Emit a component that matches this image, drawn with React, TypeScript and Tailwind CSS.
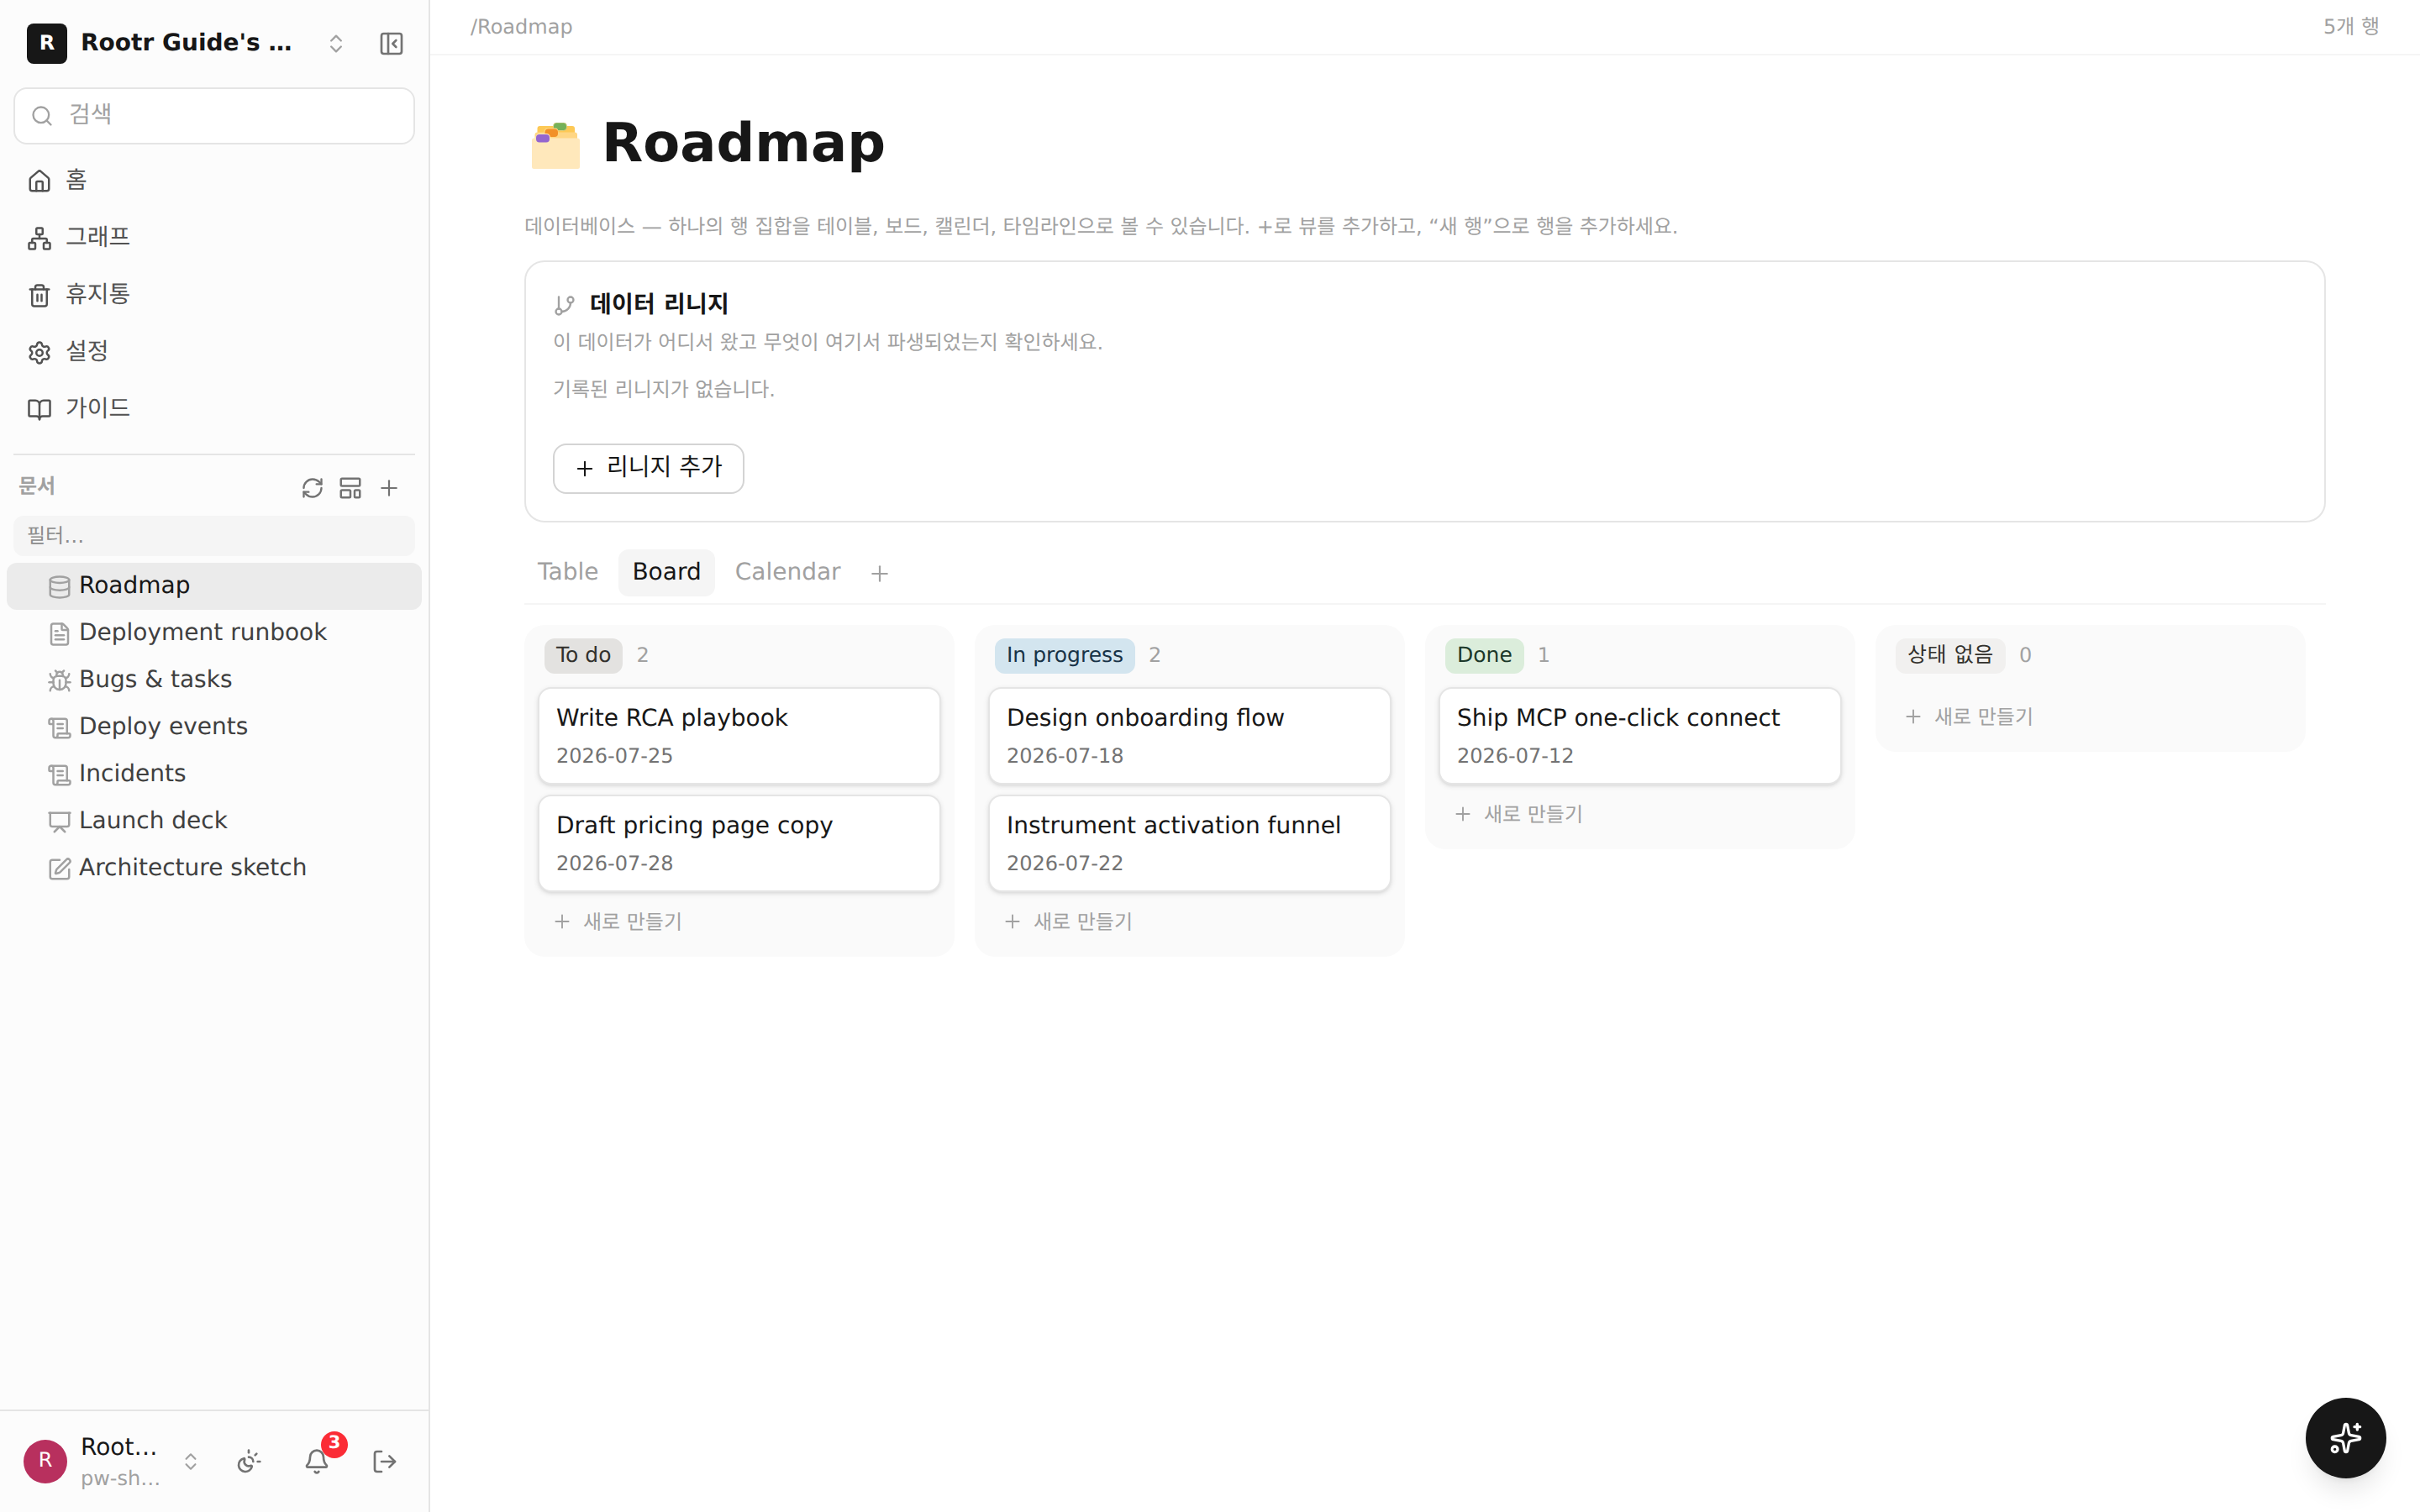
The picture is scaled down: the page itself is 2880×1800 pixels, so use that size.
import { ReactNode } from 'react';
import {
  Bell, BookOpen, Bug, ChevronsUpDown, Database, FileText, GitBranch, House, LayoutTemplate, LogOut,
  LucideIcon, Network, PanelLeftClose, Plus, Presentation, RefreshCw, ScrollText, Search, Settings,
  Sparkles, SquarePen, SunMoon, Trash2,
} from 'lucide-react';

const NAV: Array<{ label: string; icon: LucideIcon }> = [
  { label: '홈', icon: House },
  { label: '그래프', icon: Network },
  { label: '휴지통', icon: Trash2 },
  { label: '설정', icon: Settings },
  { label: '가이드', icon: BookOpen },
];

const DOCS: Array<{ label: string; icon: LucideIcon; active?: boolean }> = [
  { label: 'Roadmap', icon: Database, active: true },
  { label: 'Deployment runbook', icon: FileText },
  { label: 'Bugs & tasks', icon: Bug },
  { label: 'Deploy events', icon: ScrollText },
  { label: 'Incidents', icon: ScrollText },
  { label: 'Launch deck', icon: Presentation },
  { label: 'Architecture sketch', icon: SquarePen },
];

interface BoardColumn {
  name: string;
  badge: string;
  cards: Array<{ title: string; date: string }>;
}

const COLUMNS: BoardColumn[] = [
  {
    name: 'To do',
    badge: 'bg-[#e3e2e0] text-[#32302c]',
    cards: [
      { title: 'Write RCA playbook', date: '2026-07-25' },
      { title: 'Draft pricing page copy', date: '2026-07-28' },
    ],
  },
  {
    name: 'In progress',
    badge: 'bg-[#d3e5ef] text-[#183347]',
    cards: [
      { title: 'Design onboarding flow', date: '2026-07-18' },
      { title: 'Instrument activation funnel', date: '2026-07-22' },
    ],
  },
  {
    name: 'Done',
    badge: 'bg-[#dbeddb] text-[#1c3829]',
    cards: [{ title: 'Ship MCP one-click connect', date: '2026-07-12' }],
  },
  { name: '상태 없음', badge: 'bg-[#f1f0ef] text-[#32302c] tracking-[0.6px]', cards: [] },
];

function Sidebar() {
  return (
    <aside className="flex w-[512px] shrink-0 flex-col border-r-2 border-neutral-200 bg-[#fcfcfc]">
      {/* Workspace switcher */}
      <div className="flex h-[104px] items-center pl-8 pr-7">
        <div className="flex size-12 items-center justify-center rounded-lg bg-neutral-900 pb-[2px] text-[24px] font-bold text-white">
          R
        </div>
        <span className="ml-4 flex-1 whitespace-nowrap pb-[3px] text-[28px] leading-10 font-bold text-neutral-900">
          Rootr Guide's …
        </span>
        <ChevronsUpDown size={28} className="text-neutral-400" />
        <PanelLeftClose size={32} className="ml-9 text-neutral-500" />
      </div>

      <div className="mx-4 flex h-[68px] shrink-0 items-center gap-[18px] rounded-2xl border-2 border-neutral-200 bg-white px-[18px]">
        <Search size={28} className="text-neutral-400" />
        <span className="pb-[2px] text-[28px] leading-10 text-neutral-400">검색</span>
      </div>

      <nav className="mt-[10px] flex flex-col">
        {NAV.map(({ label, icon: Icon }) => (
          <div key={label} className="flex h-17 items-center gap-4 px-8 text-neutral-600">
            <Icon size={30} />
            <span className="pb-[3px] text-[28px] leading-10">{label}</span>
          </div>
        ))}
      </nav>

      {/* Documents */}
      <div className="mx-4 mt-[18px] flex h-[74px] shrink-0 items-center border-t-2 border-neutral-200 pl-[6px] pr-4">
        <span className="flex-1 pt-[2px] text-[24px] leading-8 font-bold text-neutral-400">문서</span>
        <div className="flex items-center gap-4 pt-[5px] text-neutral-500">
          <RefreshCw size={28} />
          <LayoutTemplate size={30} />
          <Plus size={30} strokeWidth={1.75} />
        </div>
      </div>
      <div className="mx-4 flex h-12 shrink-0 items-center rounded-xl bg-neutral-100 px-4">
        <span className="pb-[1px] text-[24px] leading-8 text-[#8c8c8c]">필터…</span>
      </div>
      <div className="mt-2 flex flex-col px-2">
        {DOCS.map(({ label, icon: Icon, active }) => (
          <div
            key={label}
            className={`flex h-14 items-center gap-2 rounded-xl pl-12 ${active ? 'bg-[#ebebeb] text-neutral-900' : 'text-neutral-700'}`}
          >
            <Icon size={30} className="mt-[2px] text-neutral-400" />
            <span className="pb-[3px] text-[28px] leading-10">{label}</span>
          </div>
        ))}
      </div>

      {/* Account */}
      <div className="mt-auto flex h-[122px] shrink-0 items-center border-t-2 border-neutral-200 pl-7 pr-9">
        <div className="flex size-[52px] items-center justify-center rounded-full bg-[#b8305e] pb-1 text-[24px] text-white">
          R
        </div>
        <div className="ml-4 flex w-[100px] flex-col whitespace-nowrap pt-[2px]">
          <span className="text-[28px] leading-[38px] text-neutral-900">Root…</span>
          <span className="text-[24px] leading-9 text-neutral-400">pw-sh…</span>
        </div>
        <ChevronsUpDown size={26} className="ml-[18px] text-neutral-400" />
        <SunMoon size={32} className="ml-10 text-neutral-500" />
        <div className="relative ml-[49px]">
          <Bell size={32} className="text-neutral-500" />
          <span className="absolute left-[21px] -top-5 flex size-8 items-center justify-center rounded-full bg-red-500 pb-[6px] text-[21px] leading-none font-bold text-white">
            3
          </span>
        </div>
        <LogOut size={32} className="ml-[49px] text-neutral-500" />
      </div>
    </aside>
  );
}

function FolderIcon() {
  return (
    <svg width="60" height="56" viewBox="0 0 60 56">
      <rect x="7.500" y="4" width="44.500" height="30" rx="3" fill="#fdc956" />
      <path d="M25.500 4H44v8H25.500z" fill="#fdc956" />
      <rect x="26.500" y="0" width="16" height="9.500" rx="4" fill="#75b159" stroke="#ffd98f" strokeWidth=".6" />
      <path d="M4.500 14.500q0-3 3-3H15q1-5 4-5h10q3.500 0 3.500 5h19.500q3 0 3 3V36h-50.500z" fill="#ffd684" />
      <rect x="16.500" y="7.500" width="15.500" height="9.500" rx="4" fill="#f29027" />
      <path d="M1 21q0-2.500 2.500-2.500H5q1-5.500 5-5.500h8q5 0 5 5.500h32q3 0 3 2.500v31.500q0 2.500-2.500 2.500h-52Q1 55 1 52.500z" fill="#ffe8bb" />
      <rect x="6" y="14" width="16" height="9.500" rx="4" fill="#9566cf" />
    </svg>
  );
}

function NewRow() {
  return (
    <div className="mt-3 flex h-[46px] items-center gap-3 pl-4 text-neutral-400">
      <Plus size={26} strokeWidth={1.75} />
      <span className="pt-[1px] text-[24px] leading-8">새로 만들기</span>
    </div>
  );
}

function Column({ name, badge, cards }: BoardColumn) {
  return (
    <div className="w-[512px] rounded-3xl bg-neutral-50 px-4 pt-4 pb-[19px]">
      <div className="mb-4 flex items-center gap-4 px-2">
        <span className={`flex h-[42px] items-center rounded-xl px-[14px] pb-[2px] text-[25px] leading-8 ${badge}`}>
          {name}
        </span>
        <span className="pb-[2px] text-[24px] leading-8 text-neutral-400">{cards.length}</span>
      </div>
      <div className="flex flex-col gap-3">
        {cards.map(({ title, date }) => (
          <div
            key={title}
            className="h-[116px] rounded-2xl border-2 border-neutral-200 bg-white px-5 pt-[15px] shadow-[0_2px_6px_0_rgba(0,0,0,0.1),0_2px_4px_-2px_rgba(0,0,0,0.1)]"
          >
            <p className="text-[28px] leading-10 text-neutral-900">{title}</p>
            <p className="mt-[9px] text-[24px] leading-8 text-neutral-500">{date}</p>
          </div>
        ))}
      </div>
      <NewRow />
    </div>
  );
}

function Tab({ children, active }: { children: ReactNode; active?: boolean }) {
  return (
    <div className={`flex h-14 items-center rounded-xl px-4 ${active ? 'bg-neutral-100 text-neutral-900' : 'text-neutral-400'}`}>
      <span className="pb-[2px] text-[28px] leading-10">{children}</span>
    </div>
  );
}

export default function App() {
  return (
    <div className="flex h-[1800px] w-[2880px] overflow-hidden bg-white font-['DejaVu_Sans','Noto_Sans_CJK_KR',sans-serif] [text-rendering:geometricPrecision]">
      <Sidebar />
      <main className="flex min-w-0 flex-1 flex-col">
        <header className="flex h-[66px] items-center justify-between border-b-2 border-neutral-100 px-12 text-[24px] leading-8 text-neutral-400">
          <span className="pb-[1px]">/Roadmap</span>
          <span className="pb-[1px]">5개 행</span>
        </header>

        <div className="px-28 pt-16">
          <div className="flex h-[88px] items-center pl-2">
            <FolderIcon />
            <h1 className="ml-6 pb-[7px] text-[64px] leading-20 font-bold text-neutral-900">Roadmap</h1>
          </div>
          <p className="mt-9 text-[24px] leading-8 tracking-[-0.06px] text-neutral-400">
            데이터베이스 — 하나의 행 집합을 테이블, 보드, 캘린더, 타임라인으로 볼 수 있습니다. +로 뷰를 추가하고, “새 행”으로 행을 추가하세요.
          </p>

          {/* Lineage */}
          <section className="mt-6 h-[312px] rounded-3xl border-2 border-neutral-200 px-8 pt-8">
            <div className="flex h-10 items-center gap-4">
              <GitBranch size={28} className="text-neutral-400" />
              <h2 className="pb-[3px] text-[28px] leading-10 font-bold tracking-[0.25px] text-neutral-900">데이터 리니지</h2>
            </div>
            <p className="mt-2 text-[24px] leading-8 tracking-[-0.06px] text-neutral-400">
              이 데이터가 어디서 왔고 무엇이 여기서 파생되었는지 확인하세요.
            </p>
            <p className="mt-6 text-[24px] leading-8 tracking-[-0.06px] text-neutral-400">기록된 리니지가 없습니다.</p>
            <button className="mt-12 flex h-15 items-center gap-3 rounded-2xl border-2 border-neutral-300 pl-[22px] pr-6 text-neutral-900">
              <Plus size={28} strokeWidth={1.75} />
              <span className="pb-[3px] text-[28px] leading-10">리니지 추가</span>
            </button>
          </section>

          {/* View tabs */}
          <div className="mt-8 flex h-[66px] items-start gap-2 border-b-2 border-neutral-100">
            <Tab>Table</Tab>
            <Tab active>Board</Tab>
            <Tab>Calendar</Tab>
            <Plus size={30} strokeWidth={1.75} className="mt-[14px] ml-[7px] text-neutral-400" />
          </div>

          <div className="mt-6 flex items-start gap-6">
            {COLUMNS.map(col => <Column key={col.name} {...col} />)}
          </div>
        </div>
      </main>

      <button className="fixed right-10 bottom-10 flex size-24 items-center justify-center rounded-full bg-neutral-900 text-white shadow-[0_20px_30px_-6px_rgba(0,0,0,0.1),0_8px_12px_-8px_rgba(0,0,0,0.1)]">
        <Sparkles size={40} />
      </button>
    </div>
  );
}
